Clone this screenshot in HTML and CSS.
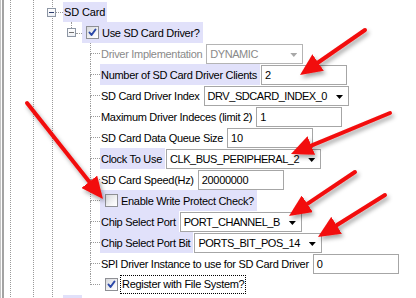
FILE: index.html
```html
<!DOCTYPE html>
<html lang="en">

<head>
    <meta charset="UTF-8">
    <meta name="viewport" content="width=device-width, initial-scale=1.0">
    <title>SD Card options</title>
    <link rel="stylesheet" href="styles.css">
</head>

<body>
    <main class="pane">
        <div class="frame">
            <div class="guide g1">
                <div class="guide g2">
                    <div class="guide g3">
                        <!-- SD Card -->
                        <div class="node root">
                            <span class="toggle"><i class="stem none"></i><span class="box"></span><i class="stem none"></i></span>
                            <span class="hline w7"></span>
                            <span class="label hl">SD Card</span>
                        </div>

                        <div class="node use">
                            <span class="toggle"><i class="stem"></i><span class="box light"></span><i class="stem none"></i></span>
                            <span class="hline w6"></span>
                            <span class="label hl check-label">
                                <span class="check"><svg width="11" height="11" viewBox="0 0 11 11"><path d="M2.5 5.5 L4.5 8 L8.5 2.5" /></svg></span>
                                Use SD Card Driver?
                            </span>
                        </div>

                        <ul class="kids">
                            <li class="row">
                                <span class="elbow"><i class="up"></i><i class="down"></i></span>
                                <span class="label muted">Driver Implementation</span>
                                <span class="select disabled"><span class="value">DYNAMIC</span><i class="caret"></i></span>
                            </li>
                            <li class="row">
                                <span class="elbow"><i class="up"></i><i class="down"></i></span>
                                <span class="label hl">Number of SD Card Driver Clients</span>
                                <span class="field">2</span>
                            </li>
                            <li class="row">
                                <span class="elbow"><i class="up"></i><i class="down"></i></span>
                                <span class="label">SD Card Driver Index</span>
                                <span class="select"><span class="value">DRV_SDCARD_INDEX_0</span><i class="caret"></i></span>
                            </li>
                            <li class="row">
                                <span class="elbow"><i class="up"></i><i class="down"></i></span>
                                <span class="label">Maximum Driver Indeces (limit 2)</span>
                                <span class="field">1</span>
                            </li>
                            <li class="row">
                                <span class="elbow"><i class="up"></i><i class="down"></i></span>
                                <span class="label">SD Card Data Queue Size</span>
                                <span class="field">10</span>
                            </li>
                            <li class="row">
                                <span class="elbow"><i class="up"></i><i class="down"></i></span>
                                <span class="label hl">Clock To Use</span>
                                <span class="select"><span class="value">CLK_BUS_PERIPHERAL_2</span><i class="caret"></i></span>
                            </li>
                            <li class="row">
                                <span class="elbow"><i class="up"></i><i class="down"></i></span>
                                <span class="label">SD Card Speed(Hz)</span>
                                <span class="field">20000000</span>
                            </li>
                            <li class="row">
                                <span class="elbow"><i class="up"></i><i class="down"></i></span>
                                <span class="label hl check-label">
                                    <span class="check"></span>
                                    Enable Write Protect Check?
                                </span>
                            </li>
                            <li class="row">
                                <span class="elbow"><i class="up"></i><i class="down"></i></span>
                                <span class="label hl">Chip Select Port</span>
                                <span class="select"><span class="value">PORT_CHANNEL_B</span><i class="caret"></i></span>
                            </li>
                            <li class="row">
                                <span class="elbow"><i class="up"></i><i class="down"></i></span>
                                <span class="label hl">Chip Select Port Bit</span>
                                <span class="select"><span class="value">PORTS_BIT_POS_14</span><i class="caret"></i></span>
                            </li>
                            <li class="row">
                                <span class="elbow"><i class="up"></i><i class="down"></i></span>
                                <span class="label">SPI Driver Instance to use for SD Card Driver</span>
                                <span class="field">0</span>
                            </li>
                            <li class="row last">
                                <span class="elbow"><i class="up"></i><i class="down"></i></span>
                                <span class="label check-label">
                                    <span class="check"><svg width="11" height="11" viewBox="0 0 11 11"><path d="M2.5 5.5 L4.5 8 L8.5 2.5" /></svg></span>
                                    <span class="focus">Register with File System?</span>
                                </span>
                            </li>
                        </ul>

                        <!-- next sibling, cut off by the window -->
                        <div class="node root">
                            <span class="toggle"></span>
                            <span class="hline w7 blank"></span>
                            <span class="label hl peek"></span>
                        </div>
                    </div>
                </div>
            </div>
        </div>
    </main>

    <!-- red callout arrows drawn over the screenshot -->
    <svg class="marks" width="416" height="298" viewBox="0 0 416 298">
        <defs>
            <marker id="head" viewBox="0 0 22 20" refX="0" refY="10" markerWidth="22" markerHeight="20"
                markerUnits="userSpaceOnUse" orient="auto">
                <path d="M0 0 L22 10 L0 20 Z" fill="#f20c0c" />
            </marker>
            <filter id="shadow" x="-20%" y="-20%" width="140%" height="140%">
                <feDropShadow dx="2" dy="3" stdDeviation="2" flood-color="#000" flood-opacity="0.35" />
            </filter>
        </defs>
        <g filter="url(#shadow)" stroke="#f20c0c" stroke-width="4" stroke-linecap="round" marker-end="url(#head)">
            <line x1="365" y1="30" x2="318.1" y2="62.5" />
            <line x1="390" y1="113" x2="311.3" y2="145.6" />
            <line x1="27" y1="103" x2="89.3" y2="181.8" />
            <line x1="355" y1="172" x2="307.3" y2="203.8" />
            <line x1="385" y1="195" x2="336.6" y2="225.3" />
        </g>
    </svg>
</body>

</html>
```

FILE: styles.css
```css
html,
body {
    margin: 0;
    height: 298px;
    overflow: hidden;
    background: #fff;
}

body {
    position: relative;
    font-family: "Liberation Sans", Arial, sans-serif;
    font-size: 11px;
    letter-spacing: -0.3px;
    color: #000;
}

/* window edge */
.pane {
    display: block;
    border-left: 1px solid #c4c4c4;
    padding-left: 1px;
}

.frame {
    border-left: 2px solid #a3a3a3;
}

/* tree guide lines */
.guide {
    border-left: 1px dotted #9a9a9a;
}

.g1 {
    margin-left: 6px;
}

.g2 {
    margin-left: 22px;
}

.g3 {
    margin-left: 18px;
    padding-top: 2px;
}

/* nodes */
.node {
    display: flex;
    align-items: stretch;
}

.root {
    height: 20px;
}

.root .toggle {
    margin-left: -6px;
}

.use {
    height: 21px;
    margin-left: 14px;
}

.toggle {
    display: flex;
    flex-direction: column;
    align-items: flex-start;
    width: 9px;
}

.stem {
    flex: 1;
    margin-left: 4px;
    border-left: 1px dotted #9a9a9a;
}

.stem.none {
    border-left: none;
}

.box {
    width: 7px;
    height: 7px;
    border: 1px solid #8d96a4;
    background: linear-gradient(#ffffff, #eef0f4);
    display: flex;
    align-items: center;
    justify-content: center;
}

.box::after {
    content: "";
    width: 5px;
    height: 1px;
    background: #2c3d6e;
}

.box.light::after {
    background: #707070;
}

.hline {
    align-self: center;
    height: 0;
    margin-top: 1px;
    border-top: 1px dotted #9a9a9a;
}

.w7 {
    width: 7px;
}

.w6 {
    width: 6px;
}

.blank {
    border-top: none;
}

.label {
    display: flex;
    align-items: center;
    height: 100%;
    padding: 0 3px 0 1px;
    white-space: nowrap;
}

.hl {
    background: #e1e1fa;
}

.root .label {
    padding: 0 2px 0 1px;
    letter-spacing: -0.15px;
}

.peek {
    width: 16px;
    padding: 0;
}

.muted {
    color: #8a8a8a;
}

.check-label {
    padding-left: 5px;
}

.use .check-label {
    padding-left: 4px;
}

.check {
    width: 11px;
    height: 11px;
    margin-right: 3px;
    border: 1px solid #8e8f94;
    background: linear-gradient(135deg, #d6d8dc, #f7f7f8 70%, #fff);
    display: flex;
    align-items: center;
    justify-content: center;
}

.check path {
    fill: none;
    stroke: #2b48a8;
    stroke-width: 2;
    stroke-linecap: round;
    stroke-linejoin: round;
}

.focus {
    border: 1px dotted #000;
    padding: 0 1px;
    margin-left: -1px;
    line-height: 17px;
}

/* children of "Use SD Card Driver?" */
.kids {
    list-style: none;
    margin: 0 0 0 37px;
    padding: 0;
}

.row {
    display: flex;
    align-items: stretch;
    height: 21px;
}

.elbow {
    display: flex;
    flex-direction: column;
    flex: none;
    width: 10px;
}

.up {
    flex: 1;
    border-left: 1px dotted #9a9a9a;
    border-bottom: 1px dotted #9a9a9a;
}

.down {
    flex: 1;
    border-left: 1px dotted #9a9a9a;
}

.last .down {
    border-left: none;
}

/* value widgets */
.field,
.select {
    box-sizing: border-box;
    height: 20px;
    margin: 1px 0 0 1px;
    padding: 0 5px 0 3px;
    border: 1px solid #a6a6a6;
    background: #fff;
    display: flex;
    align-items: center;
    white-space: nowrap;
}

.field {
    width: 86px;
}

.select {
    justify-content: space-between;
    min-width: 97px;
}

.value {
    letter-spacing: -0.45px;
}

.caret {
    width: 7px;
    height: 4px;
    margin-left: 9px;
    margin-top: 2px;
    background: #000;
    clip-path: polygon(0 0, 100% 0, 50% 100%);
}

.disabled {
    color: #8a8a8a;
    border-color: #b4b4b4;
}

.disabled .caret {
    background: #a8a8a8;
}

.marks {
    position: absolute;
    top: 0;
    left: 0;
    pointer-events: none;
}
```
